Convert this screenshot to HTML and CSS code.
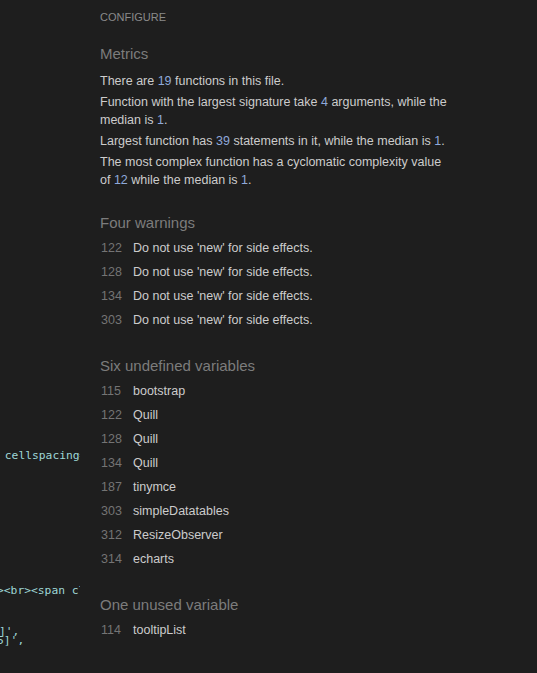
FILE: index.html
```html
<!DOCTYPE html>
<html>
<head>
<meta charset="utf-8">
<link rel="stylesheet" href="styles.css">
</head>
<body>
<div class="app">
  <div class="code">
    <div class="cl c1"> cellspacing="0"</div>
    <div class="cl"></div>
    <div class="cl"></div>
    <div class="cl"></div>
    <div class="cl"></div>
    <div class="cl"></div>
    <div class="cl"></div>
    <div class="cl"></div>
    <div class="cl"></div>
    <div class="cl"></div>
    <div class="cl c3">&gt;&lt;br&gt;&lt;span class</div>
    <div class="cl"></div>
    <div class="cl"></div>
    <div class="cl c4">]',</div>
    <div class="cl c5">5]',</div>
  </div>
  <div class="panel">
    <div class="configure">CONFIGURE</div>
    <h2 class="heading first">Metrics</h2>
    <p class="para">There are <span class="num">19</span> functions in this file.</p>
    <p class="para">Function with the largest signature take <span class="num">4</span> arguments, while the median is <span class="num">1</span>.</p>
    <p class="para">Largest function has <span class="num">39</span> statements in it, while the median is <span class="num">1</span>.</p>
    <p class="para">The most complex function has a cyclomatic complexity value of <span class="num">12</span> while the median is <span class="num">1</span>.</p>

    <h2 class="heading">Four warnings</h2>
    <ul class="list">
      <li class="row"><span class="ln">122</span><span class="msg">Do not use 'new' for side effects.</span></li>
      <li class="row"><span class="ln">128</span><span class="msg">Do not use 'new' for side effects.</span></li>
      <li class="row"><span class="ln">134</span><span class="msg">Do not use 'new' for side effects.</span></li>
      <li class="row"><span class="ln">303</span><span class="msg">Do not use 'new' for side effects.</span></li>
    </ul>

    <h2 class="heading">Six undefined variables</h2>
    <ul class="list">
      <li class="row"><span class="ln">115</span><span class="msg">bootstrap</span></li>
      <li class="row"><span class="ln">122</span><span class="msg">Quill</span></li>
      <li class="row"><span class="ln">128</span><span class="msg">Quill</span></li>
      <li class="row"><span class="ln">134</span><span class="msg">Quill</span></li>
      <li class="row"><span class="ln">187</span><span class="msg">tinymce</span></li>
      <li class="row"><span class="ln">303</span><span class="msg">simpleDatatables</span></li>
      <li class="row"><span class="ln">312</span><span class="msg">ResizeObserver</span></li>
      <li class="row"><span class="ln">314</span><span class="msg">echarts</span></li>
    </ul>

    <h2 class="heading">One unused variable</h2>
    <ul class="list">
      <li class="row"><span class="ln">114</span><span class="msg">tooltipList</span></li>
    </ul>
  </div>
</div>
</body>
</html>
```

FILE: styles.css
```css
html, body {
  margin: 0;
  padding: 0;
  background: #1e1e1e;
  height: 100%;
}
body {
  font-family: "Liberation Sans", Arial, Helvetica, sans-serif;
  color: #cccccc;
  overflow: hidden;
}
.app {
  display: flex;
  height: 673px;
}
.code {
  width: 80px;
  flex: none;
  overflow: hidden;
  padding-top: 449px;
  font-family: "DejaVu Sans Mono", monospace;
  font-size: 11.3px;
  color: #9fd6d6;
}
.cl {
  white-space: pre;
  height: 13.5px;
  line-height: 13.5px;
}
.c1 { margin-left: -2px; }
.c3 { margin-left: -3px; }
.c4 { margin-left: -1px; }
.c5 { margin-left: -3px; margin-top: -4px; }
.panel {
  width: 352px;
  padding-left: 20px;
  padding-top: 10px;
}
.configure {
  font-size: 11px;
  line-height: 14px;
  color: #8a8a8a;
}
.heading {
  margin: 24px 0 0;
  font-size: 15px;
  font-weight: normal;
  line-height: 20px;
  color: #7c7c7c;
}
.heading.first {
  margin-top: 20px;
  margin-bottom: 8px;
}
.para {
  margin: 3px 0 0;
  font-size: 12.5px;
  line-height: 18px;
  color: #cccccc;
}
.num {
  color: #8fa9da;
}
.list {
  list-style: none;
  margin: 3px 0 0;
  padding: 0;
}
.row {
  display: flex;
  font-size: 12.5px;
  line-height: 24px;
}
.ln {
  width: 32px;
  flex: none;
  padding-left: 1px;
  color: #747474;
}
.msg {
  color: #cccccc;
}
```
